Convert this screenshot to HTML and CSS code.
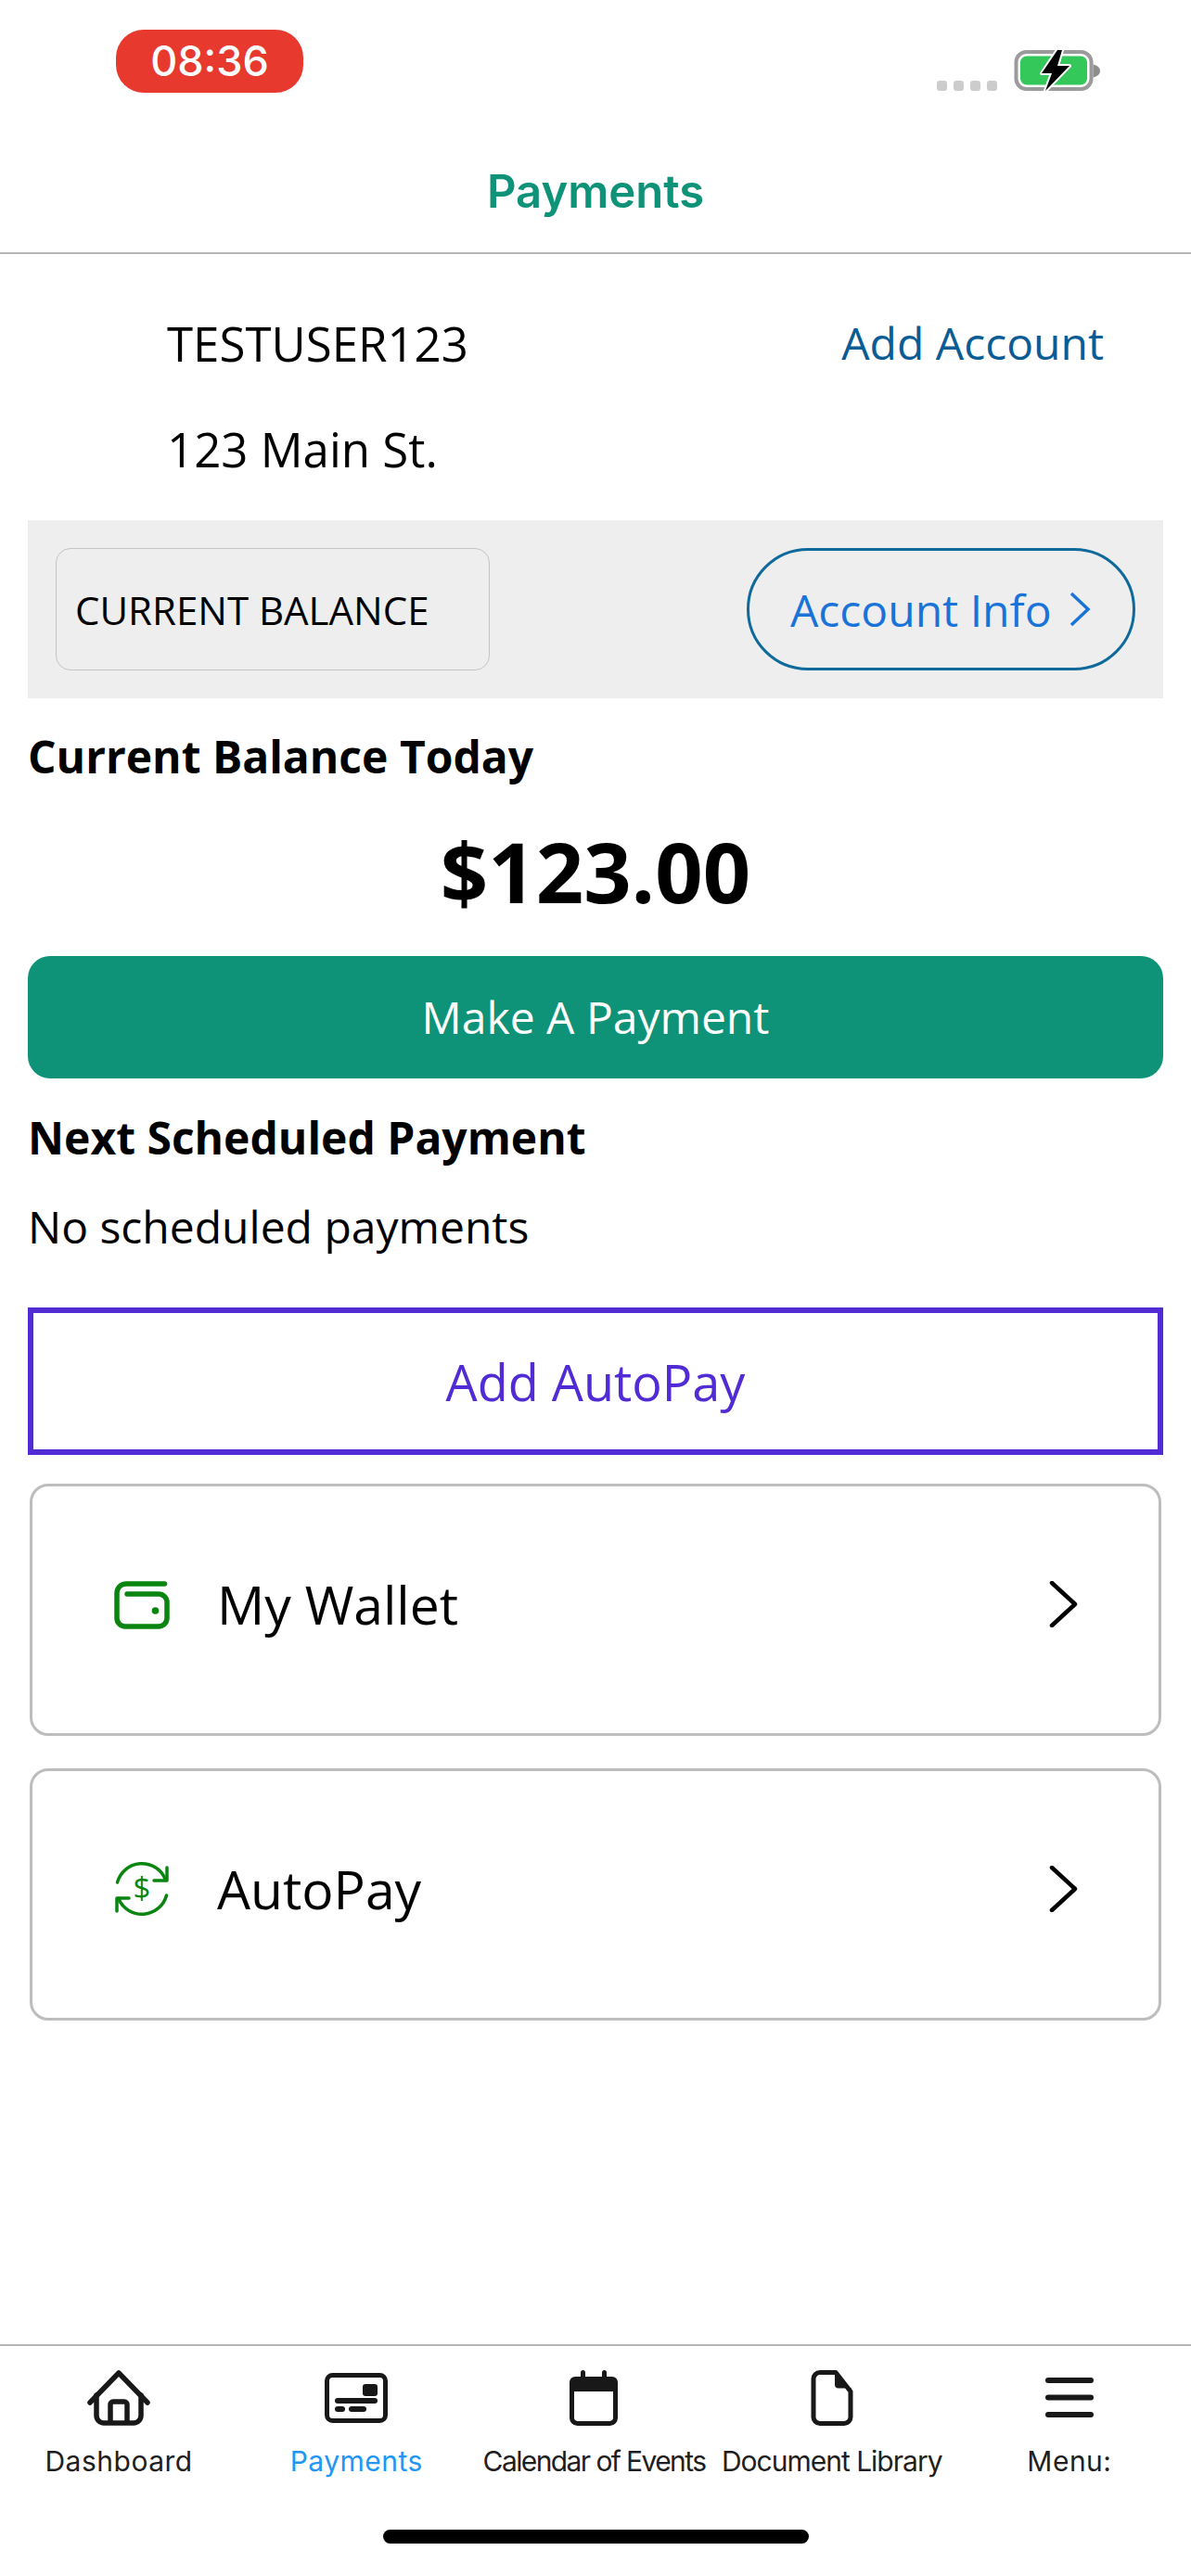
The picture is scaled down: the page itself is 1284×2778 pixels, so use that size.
FILE: index.html
```html
<!DOCTYPE html>
<html lang="en">
<head>
    <meta charset="UTF-8">
    <meta name="viewport" content="width=device-width, initial-scale=1.0">
    <title>Payments</title>
    <link rel="stylesheet" href="styles.css">
</head>
<body>
    <div class="page">
        <header class="top">
            <div class="status-bar">
                <div class="clock">08:36</div>
                <div class="status-icons">
                    <div class="signal"><span></span><span></span><span></span><span></span></div>
                    <svg class="battery" width="94" height="46" viewBox="0 0 94 46">
                        <rect x="2.500" y="3" width="81" height="40" rx="11" fill="none" stroke="#9b9b9b" stroke-width="4"/>
                        <rect x="7" y="7.500" width="72" height="31" rx="7" fill="#34c759"/>
                        <path d="M85.500 16.500 C90 17.500 93 20 93 23.500 C93 27 90 29.500 85.500 30.500 Z" fill="#8e8e8e"/>
                        <path d="M47 1 L30 26 H41 L34 45 L60 18 H47 L52 1 Z" fill="#000" stroke="#fff" stroke-width="4" stroke-linejoin="round" paint-order="stroke"/>
                    </svg>
                </div>
            </div>
            <h1 class="title">Payments</h1>
        </header>

        <main class="content">
            <div class="account">
                <div class="account-row">
                    <span>TESTUSER123</span>
                    <a href="#" class="add-account">Add Account</a>
                </div>
                <div class="account-address">123 Main St.</div>
            </div>

            <div class="balance-band">
                <div class="balance-select">CURRENT BALANCE</div>
                <a href="#" class="account-info">
                    Account Info
                    <svg width="24" height="38" viewBox="0 0 24 38"><polyline points="3,2 21,19 3,36" fill="none" stroke="#1a73d9" stroke-width="3.500"/></svg>
                </a>
            </div>

            <div class="section-title balance-title">Current Balance Today</div>
            <div class="amount">$123.00</div>
            <a href="#" class="pay-button">Make A Payment</a>

            <div class="section-title next-title">Next Scheduled Payment</div>
            <div class="no-payments">No scheduled payments</div>

            <a href="#" class="autopay-button">Add AutoPay</a>

            <a href="#" class="link-card">
                <svg class="card-icon wallet" width="60" height="52" viewBox="0 0 60 52">
                    <path d="M54.500 3 H13 A10 10 0 0 0 3 13 V40 A9 9 0 0 0 12 49 H48 A9 9 0 0 0 57 40 V23 A9 9 0 0 0 48 14 H14" fill="none" stroke="#0a8510" stroke-width="5.500" stroke-linecap="round"/>
                    <circle cx="44.500" cy="32" r="3.800" fill="#0a8510"/>
                </svg>
                <span class="card-label">My Wallet</span>
                <svg class="chevron" width="32" height="50" viewBox="0 0 32 50"><polyline points="3,2 28,25 3,48" fill="none" stroke="#000" stroke-width="4.500" stroke-linecap="round" stroke-linejoin="round"/></svg>
            </a>

            <a href="#" class="link-card">
                <svg class="card-icon repeat" width="60" height="60" viewBox="0 0 60 60">
                    <g fill="none" stroke="#0a8510" stroke-width="3.500" stroke-linecap="round" stroke-linejoin="round">
                        <path d="M3.500 23 A27.400 27.400 0 0 1 55 19"/>
                        <polyline points="57,7 57,21 43,21"/>
                        <path d="M56.500 37 A27.400 27.400 0 0 1 5 41"/>
                        <polyline points="3,54 3,40 16,40"/>
                    </g>
                    <text x="30" y="41" class="dollar">$</text>
                </svg>
                <span class="card-label">AutoPay</span>
                <svg class="chevron" width="32" height="50" viewBox="0 0 32 50"><polyline points="3,2 28,25 3,48" fill="none" stroke="#000" stroke-width="4.500" stroke-linecap="round" stroke-linejoin="round"/></svg>
            </a>
        </main>

        <footer class="tabs">
            <nav class="tab-row">
                <a href="#" class="tab">
                    <span class="tab-icon">
                        <svg width="68" height="60" viewBox="0 0 68 60" fill="none" stroke="#181818" stroke-width="5.500" stroke-linecap="round" stroke-linejoin="round">
                            <path d="M3 35 L34 3 L65 35"/>
                            <path d="M10 27 V49 A8 8 0 0 0 18 57 H50 A8 8 0 0 0 58 49 V27"/>
                            <path d="M25 56 V37 A3 3 0 0 1 28 34 H40 A3 3 0 0 1 43 37 V56"/>
                        </svg>
                    </span>
                    <span class="tab-label">Dashboard</span>
                </a>
                <a href="#" class="tab active">
                    <span class="tab-icon">
                        <svg width="68" height="54" viewBox="0 0 68 54">
                            <rect x="2.500" y="2.500" width="63" height="49" rx="6" fill="none" stroke="#181818" stroke-width="5"/>
                            <rect x="41" y="12" width="16" height="13" rx="3" fill="#181818"/>
                            <rect x="11" y="27" width="46" height="6" rx="3" fill="#181818"/>
                            <rect x="11" y="36" width="11" height="6" rx="3" fill="#181818"/>
                            <rect x="26" y="36" width="19" height="6" rx="3" fill="#181818"/>
                        </svg>
                    </span>
                    <span class="tab-label">Payments</span>
                </a>
                <a href="#" class="tab">
                    <span class="tab-icon">
                        <svg width="54" height="60" viewBox="0 0 54 60">
                            <path d="M7 7 H47 A6 6 0 0 1 53 13 V23 H1 V13 A6 6 0 0 1 7 7 Z" fill="#181818"/>
                            <path d="M3.500 20 V51 A6 6 0 0 0 9.500 57.500 H44.500 A6 6 0 0 0 50.500 51 V20" fill="none" stroke="#181818" stroke-width="5"/>
                            <rect x="13" y="0" width="5" height="12" rx="2.500" fill="#181818"/>
                            <rect x="36" y="0" width="5" height="12" rx="2.500" fill="#181818"/>
                        </svg>
                    </span>
                    <span class="tab-label squeezed">Calendar of Events</span>
                </a>
                <a href="#" class="tab">
                    <span class="tab-icon">
                        <svg width="46" height="60" viewBox="0 0 46 60">
                            <path d="M10 2.500 H27 L43 23 V50 A7 7 0 0 1 36 57.500 H10 A7 7 0 0 1 3 50 V10 A7 7 0 0 1 10 2.500 Z" fill="none" stroke="#181818" stroke-width="5" stroke-linejoin="round"/>
                            <path d="M26 3 L44 23 V19.500 H30 A4 4 0 0 1 26 15.500 Z" fill="#181818"/>
                        </svg>
                    </span>
                    <span class="tab-label tight">Document Library</span>
                </a>
                <a href="#" class="tab">
                    <span class="tab-icon">
                        <svg width="52" height="44" viewBox="0 0 52 44" fill="#181818">
                            <rect y="0" width="52" height="6" rx="3"/>
                            <rect y="18.500" width="52" height="6" rx="3"/>
                            <rect y="37" width="52" height="6" rx="3"/>
                        </svg>
                    </span>
                    <span class="tab-label">Menu:</span>
                </a>
            </nav>
            <div class="home-bar"></div>
        </footer>
    </div>
</body>
</html>
```

FILE: styles.css
```css
* {
    box-sizing: border-box;
}
body {
    margin: 0;
    font-family: "Open Sans", sans-serif;
    color: #000000;
    background: #ffffff;
}
a {
    text-decoration: none;
}
.page {
    height: 2778px;
    display: flex;
    flex-direction: column;
}

/* top of the screen */
.top {
    height: 274px;
    border-bottom: 2px solid #b4b4b4;
}
.status-bar {
    height: 160px;
    padding: 32px 97px 0 125px;
    display: flex;
    justify-content: space-between;
    align-items: flex-start;
}
.clock {
    width: 202px;
    height: 68px;
    border-radius: 30px;
    background: #e8392f;
    color: #ffffff;
    font-family: Inter, sans-serif;
    font-size: 45px;
    font-weight: 500;
    line-height: 68px;
    text-align: center;
}
.status-icons {
    margin-top: 21px;
    display: flex;
    align-items: flex-end;
    gap: 18px;
}
.signal {
    display: flex;
    gap: 7px;
    margin-bottom: 1px;
}
.signal span {
    width: 11px;
    height: 11px;
    border-radius: 3px;
    background: #cccccc;
}
.battery {
    display: block;
}
.title {
    margin: 0;
    font-family: Inter, sans-serif;
    font-size: 49px;
    font-weight: 600;
    line-height: 94px;
    color: #0e9278;
    text-align: center;
}

/* main part */
.content {
    flex: 1;
    padding: 0 30px;
}
.account {
    padding: 62px 64px 0 150px;
    font-size: 51px;
}
.account-row {
    display: flex;
    justify-content: space-between;
    line-height: 68px;
}
.add-account {
    font-size: 48px;
    color: #0a5c94;
}
.account-address {
    margin-top: 46px;
    line-height: 68px;
}
.balance-band {
    margin-top: 43px;
    height: 192px;
    padding: 30px;
    background: #eeeeee;
    display: flex;
    justify-content: space-between;
}
.balance-select {
    width: 468px;
    border: 1.500px solid #c4c4c4;
    border-radius: 16px;
    padding-left: 20px;
    font-size: 42px;
    line-height: 132px;
}
.account-info {
    width: 419px;
    border: 3px solid #0f6a9b;
    border-radius: 66px;
    padding-left: 44px;
    display: flex;
    align-items: center;
    gap: 18px;
    font-size: 48px;
    color: #1a73d9;
}
.section-title {
    font-size: 48px;
    font-weight: 700;
    line-height: 66px;
}
.balance-title {
    margin-top: 30px;
}
.amount {
    margin-top: 30px;
    font-size: 90px;
    font-weight: 700;
    line-height: 120px;
    text-align: center;
}
.pay-button {
    display: block;
    margin-top: 32px;
    height: 132px;
    border-radius: 24px;
    background: #0e9278;
    color: #ffffff;
    font-size: 48px;
    line-height: 132px;
    text-align: center;
}
.next-title {
    margin-top: 31px;
}
.no-payments {
    margin-top: 30px;
    font-size: 48px;
    line-height: 66px;
}
.autopay-button {
    display: block;
    margin-top: 54px;
    height: 159px;
    border: 6px solid #512bd4;
    color: #512bd4;
    font-size: 54px;
    line-height: 148px;
    text-align: center;
}
.link-card {
    margin: 31px 2px 0;
    height: 272px;
    border: 3px solid #bdbdbd;
    border-radius: 20px;
    padding: 0 86px 12px 88px;
    display: flex;
    align-items: center;
    color: #000000;
}
.link-card + .link-card {
    margin-top: 35px;
}
.card-label {
    flex: 1;
    margin-left: 51px;
    font-size: 57px;
}
.wallet {
    margin-top: 2px;
}
.repeat {
    flex-shrink: 0;
}
.dollar {
    font-family: "Open Sans", sans-serif;
    font-size: 33px;
    font-weight: 500;
    fill: #0a8510;
    text-anchor: middle;
}

/* bottom tabs */
.tabs {
    height: 250px;
    border-top: 2px solid #b4b4b4;
}
.tab-row {
    display: grid;
    grid-template-columns: repeat(5, 1fr);
    padding: 26px 3px 0 0;
}
.tab {
    display: flex;
    flex-direction: column;
    align-items: center;
    color: #1e1e1e;
    font-family: Inter, sans-serif;
}
.tab-icon {
    height: 60px;
    display: flex;
    align-items: center;
}
.tab-label {
    margin-top: 18px;
    font-size: 30px;
    line-height: 40px;
    letter-spacing: 0.5px;
    white-space: nowrap;
}
.tab-label.squeezed {
    letter-spacing: -1.6px;
}
.tab-label.tight {
    letter-spacing: -1px;
}
.tab.active .tab-label {
    color: #2196f3;
}
.home-bar {
    width: 459px;
    height: 15px;
    margin: 54px auto 0;
    border-radius: 8px;
    background: #000000;
}
```
